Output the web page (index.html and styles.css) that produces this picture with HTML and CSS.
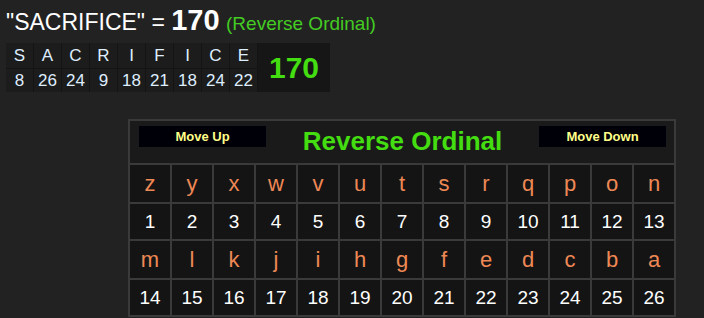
FILE: index.html
```html
<!DOCTYPE html>
<html lang="en">
<head>
    <meta charset="UTF-8">
    <meta name="viewport" content="width=device-width, initial-scale=1.0">
    <title>Gematria - Reverse Ordinal</title>
    <link rel="stylesheet" href="styles.css">
</head>
<body>

    <div class="result">
        <span class="phrase">"SACRIFICE" = </span><span class="total">170</span>
        <span class="cipher-name">(Reverse Ordinal)</span>
    </div>

    <!-- letter by letter breakdown -->
    <table class="breakdown">
        <tr>
            <td class="ch">S</td><td class="ch">A</td><td class="ch">C</td><td class="ch">R</td><td class="ch">I</td><td class="ch">F</td><td class="ch">I</td><td class="ch">C</td><td class="ch">E</td>
            <td class="sum" rowspan="2">170</td>
        </tr>
        <tr>
            <td class="val">8</td><td class="val">26</td><td class="val">24</td><td class="val">9</td><td class="val">18</td><td class="val">21</td><td class="val">18</td><td class="val">24</td><td class="val">22</td>
        </tr>
    </table>

    <!-- cipher chart -->
    <table class="chart">
        <tr>
            <td class="chart-head" colspan="13">
                <div class="head-row">
                    <button class="move-btn">Move Up</button>
                    <span class="chart-title">Reverse Ordinal</span>
                    <button class="move-btn">Move Down</button>
                </div>
            </td>
        </tr>
        <tr class="letters">
            <td>z</td><td>y</td><td>x</td><td>w</td><td>v</td><td>u</td><td>t</td><td>s</td><td>r</td><td>q</td><td>p</td><td>o</td><td>n</td>
        </tr>
        <tr class="numbers">
            <td>1</td><td>2</td><td>3</td><td>4</td><td>5</td><td>6</td><td>7</td><td>8</td><td>9</td><td>10</td><td>11</td><td>12</td><td>13</td>
        </tr>
        <tr class="letters">
            <td>m</td><td>l</td><td>k</td><td>j</td><td>i</td><td>h</td><td>g</td><td>f</td><td>e</td><td>d</td><td>c</td><td>b</td><td>a</td>
        </tr>
        <tr class="numbers">
            <td>14</td><td>15</td><td>16</td><td>17</td><td>18</td><td>19</td><td>20</td><td>21</td><td>22</td><td>23</td><td>24</td><td>25</td><td>26</td>
        </tr>
    </table>

</body>
</html>
```

FILE: styles.css
```css
body {
    font-family: 'Liberation Sans', Arial, sans-serif;
    background: #222;
    color: #fff;
    margin: 0;
    padding: 4px 6px 0 6px;
}
.result {
    height: 39px;
    line-height: 32px;
    font-size: 23px;
    white-space: nowrap;
}
.phrase {
    color: #fff;
}
.total {
    font-size: 29px;
    font-weight: bold;
}
.cipher-name {
    color: #44cc22;
    font-size: 19px;
}
.breakdown {
    border-collapse: separate;
    border-spacing: 0;
    background: #161616;
}
.breakdown td {
    text-align: center;
    padding: 0;
}
.breakdown .ch,
.breakdown .val {
    width: 27px;
    background: #1c1c1c;
    color: #dfeeff;
    font-size: 17px;
    border-right: 1px solid #141414;
}
.breakdown .ch {
    height: 25px;
    border-bottom: 1px solid #141414;
}
.breakdown .val {
    height: 23px;
}
.breakdown .sum {
    width: 72px;
    color: #44dd11;
    font-size: 30px;
    font-weight: bold;
    background: #161616;
}
.chart {
    margin: 27px 0 0 122px;
    border-collapse: collapse;
    background: #141414;
    border: 1px solid #404040;
}
.chart td {
    border: 2px solid #3a3a3a;
    width: 40px;
    text-align: center;
    padding: 0;
}
.chart-head {
    height: 42px;
    background: #1a1a1a;
    vertical-align: top;
}
.head-row {
    display: flex;
    align-items: flex-start;
    justify-content: space-between;
    padding: 5px 8px 0 9px;
}
.move-btn {
    width: 127px;
    height: 21px;
    background: #000008;
    color: #ffff88;
    border: none;
    font-family: 'Liberation Sans', Arial, sans-serif;
    font-size: 13px;
    font-weight: bold;
    padding: 0;
}
.chart-title {
    color: #44dd11;
    font-size: 26px;
    font-weight: bold;
}
.letters td {
    height: 37px;
    color: #ee8855;
    font-size: 22px;
}
.numbers td {
    height: 35px;
    color: #fff;
    font-size: 19px;
}
```
